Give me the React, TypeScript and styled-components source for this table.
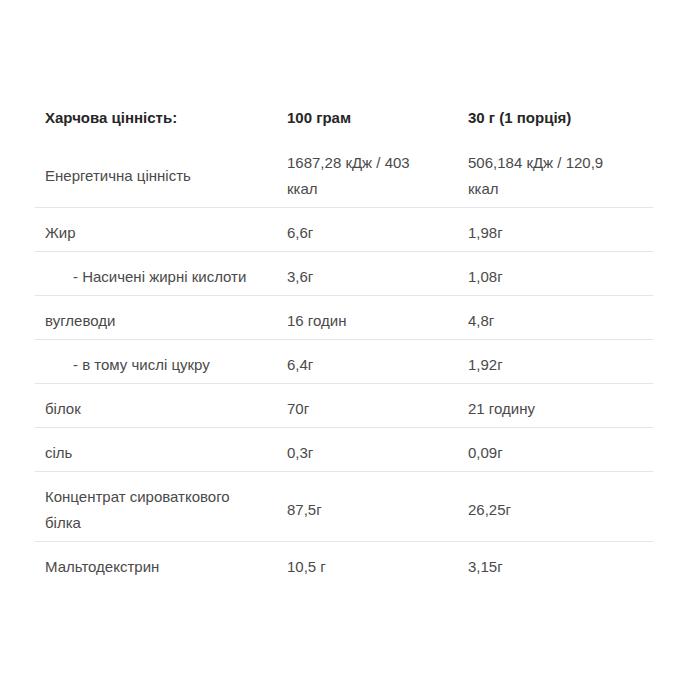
import React from 'react';
import styled, { createGlobalStyle } from 'styled-components';

const GlobalStyle = createGlobalStyle`
  html, body {
    margin: 0;
    padding: 0;
    background: #fff;
  }
  body {
    font-family: "Liberation Sans", Arial, sans-serif;
  }
`;

interface NutritionRow {
  name: string;
  per100: string;
  perServing: string;
  sub?: boolean;
}

const rows: NutritionRow[] = [
  { name: 'Енергетична цінність', per100: '1687,28 кДж / 403 ккал', perServing: '506,184 кДж / 120,9 ккал' },
  { name: 'Жир', per100: '6,6г', perServing: '1,98г' },
  { name: '- Насичені жирні кислоти', per100: '3,6г', perServing: '1,08г', sub: true },
  { name: 'вуглеводи', per100: '16 годин', perServing: '4,8г' },
  { name: '- в тому числі цукру', per100: '6,4г', perServing: '1,92г', sub: true },
  { name: 'білок', per100: '70г', perServing: '21 годину' },
  { name: 'сіль', per100: '0,3г', perServing: '0,09г' },
  { name: 'Концентрат сироваткового білка', per100: '87,5г', perServing: '26,25г' },
  { name: 'Мальтодекстрин', per100: '10,5 г', perServing: '3,15г' },
];

const Page = styled.div`
  padding: 94px 0 40px 35px;
`;

const Table = styled.table`
  width: 618px;
  border-collapse: collapse;
  table-layout: fixed;
  font-size: 15px;
  line-height: 26px;
  color: #4a4a4a;
`;

const Row = styled.tr`
  border-bottom: 1px solid #e3e7ec;

  &:last-child {
    border-bottom: none;
  }
`;

const HeadCell = styled.th`
  text-align: left;
  font-weight: 700;
  color: #262626;
  padding: 11px 20px 7px 10px;
`;

const Cell = styled.td<{ $sub?: boolean }>`
  vertical-align: middle;
  padding: 12px 20px 5px ${(p) => (p.$sub ? '38px' : '10px')};
`;

export default function App() {
  return (
    <Page>
      <GlobalStyle />
      <Table>
        <colgroup>
          <col style={{ width: 242 }} />
          <col style={{ width: 181 }} />
          <col />
        </colgroup>
        <thead>
          <Row>
            <HeadCell>Харчова цінність:</HeadCell>
            <HeadCell>100 грам</HeadCell>
            <HeadCell>30 г (1 порція)</HeadCell>
          </Row>
        </thead>
        <tbody>
          {rows.map((r) => (
            <Row key={r.name}>
              <Cell $sub={r.sub}>{r.name}</Cell>
              <Cell>{r.per100}</Cell>
              <Cell>{r.perServing}</Cell>
            </Row>
          ))}
        </tbody>
      </Table>
    </Page>
  );
}
